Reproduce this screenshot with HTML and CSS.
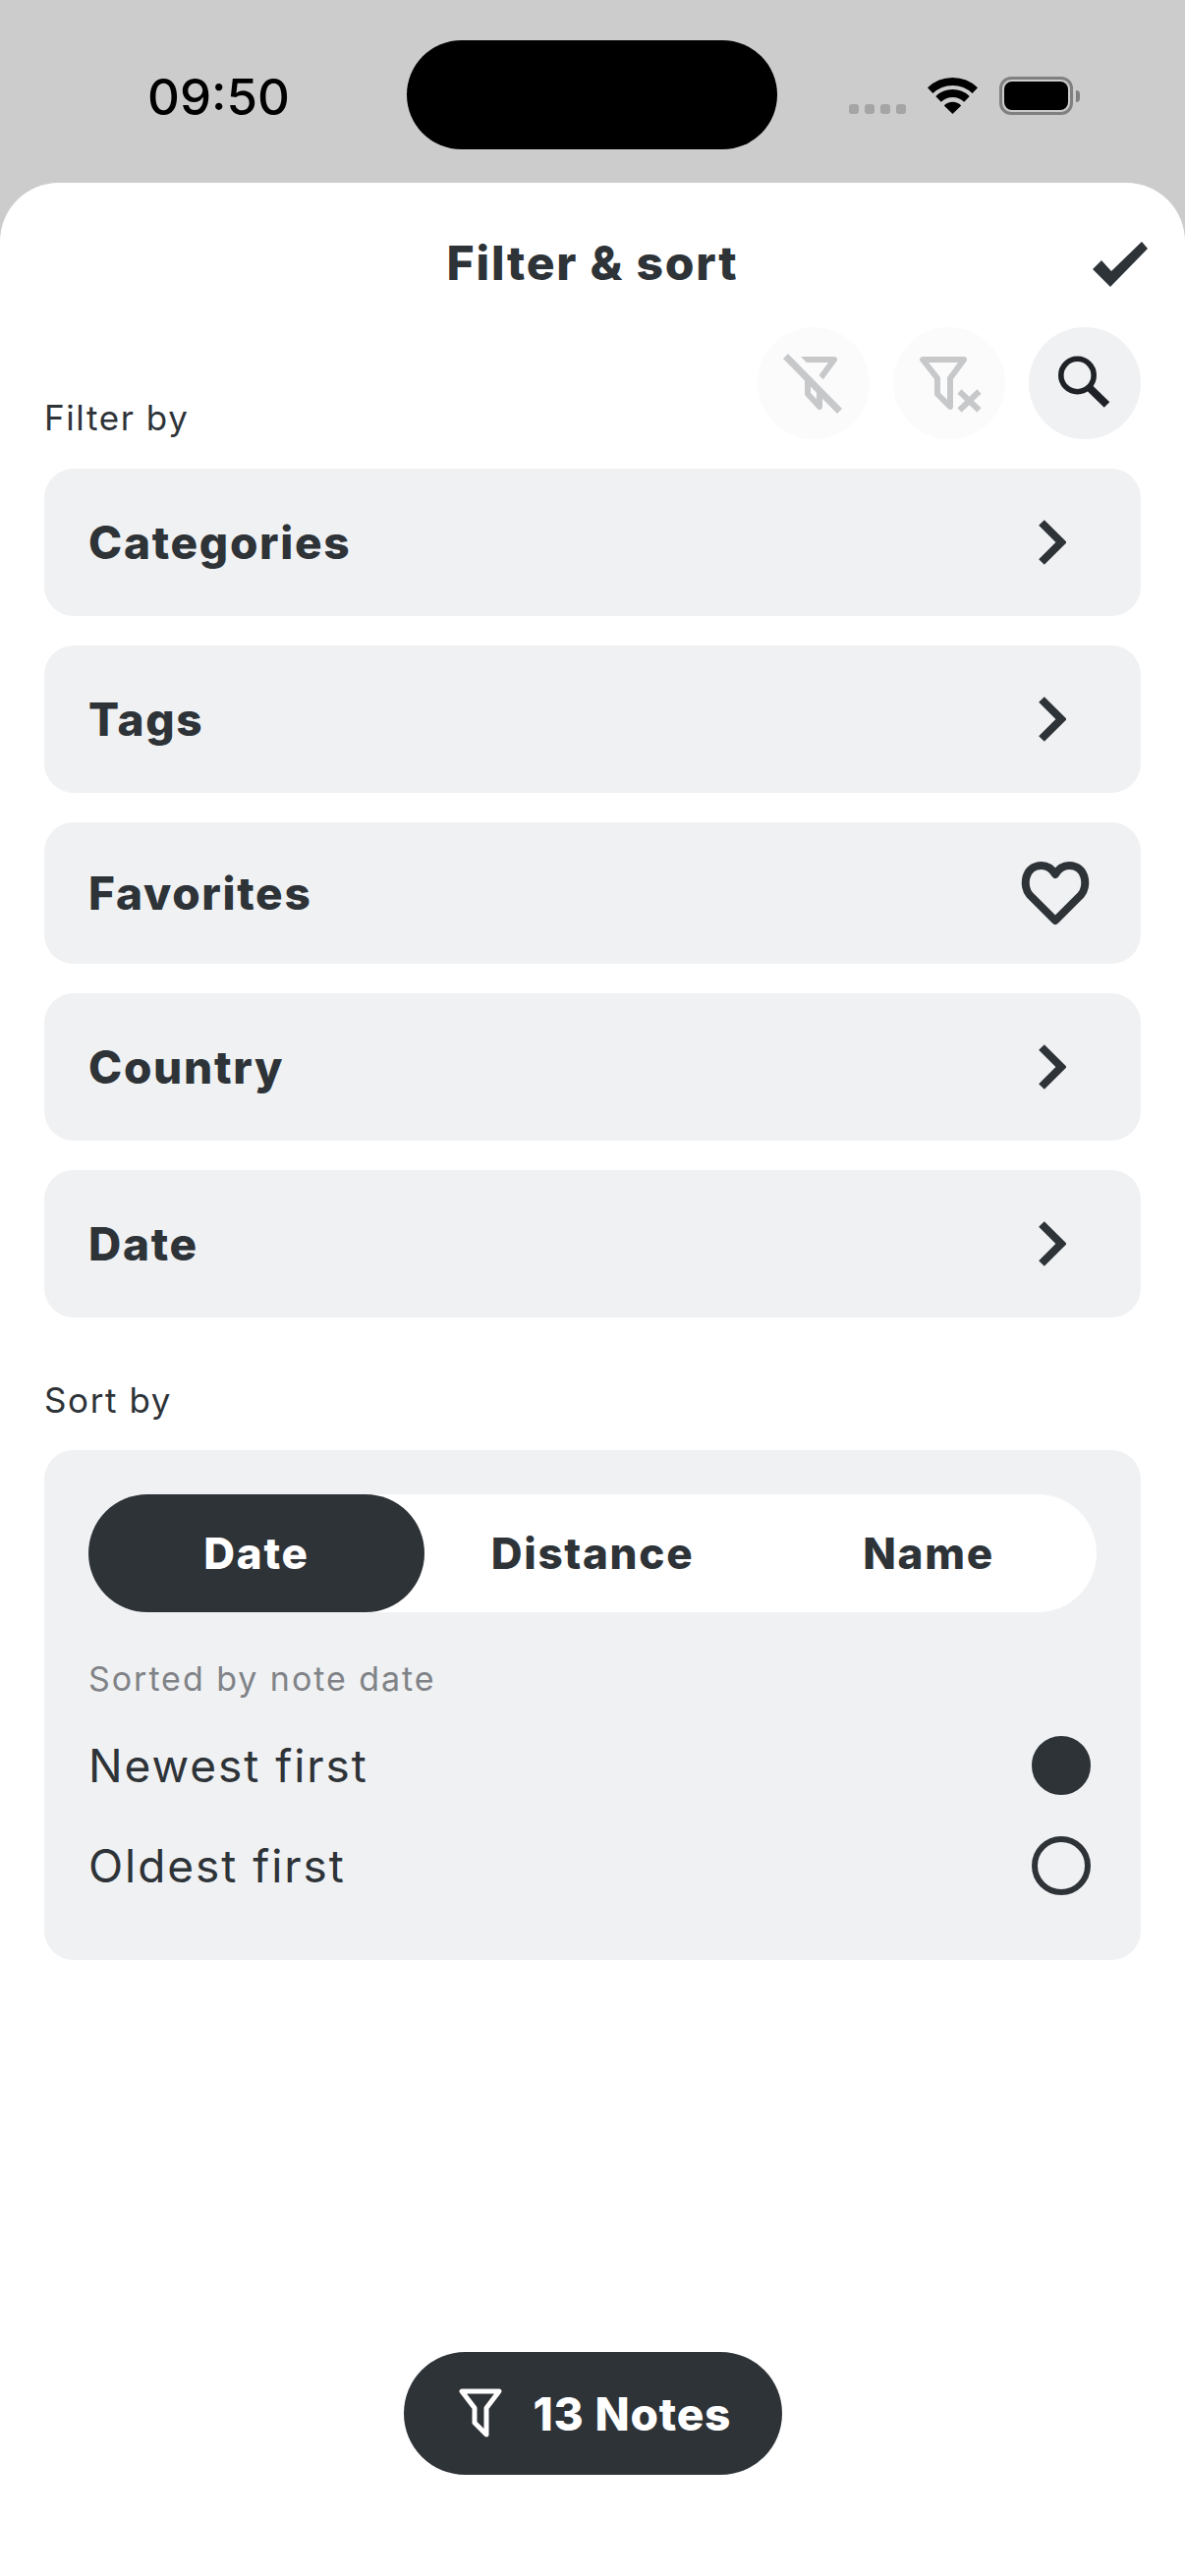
FILE: index.html
```html
<!DOCTYPE html>
<html lang="en">
<head>
<meta charset="utf-8">
<title>Filter &amp; sort</title>
<link rel="stylesheet" href="styles.css">
</head>
<body>
<div class="status">
  <div class="status-left"><span class="time">09:50</span></div>
  <div class="island"></div>
  <div class="status-right">
    <div class="dots"><i></i><i></i><i></i><i></i></div>
    <svg class="wifi" viewBox="0 0 51 37"><path d="M2.7 13.2A33 33 0 0 1 48.3 13.2" fill="none" stroke="#000" stroke-width="8"/><path d="M11 21.9A21 21 0 0 1 40 21.9" fill="none" stroke="#000" stroke-width="8"/><path d="M25.5 37L16.8 28.6A12 12 0 0 1 34.2 28.6Z"/></svg>
    <div class="battery"><div class="battery-body"><div class="battery-fill"></div></div><div class="battery-cap"></div></div>
  </div>
</div>
<main class="sheet">
  <header class="header">
    <span></span>
    <h1 class="title">Filter &amp; sort</h1>
    <svg class="check" viewBox="0 0 58 48"><path d="M1 29L10 20L20 31L51 1L57 8L19 47Z" fill="#2e3338"/></svg>
  </header>
  <div class="filter-head">
    <span class="label">Filter by</span>
    <div class="tools">
      <div class="tool tool-off"><svg viewBox="0 0 114 114"><path d="M43.500 33H78L64 52" fill="none" stroke="#c7c8ca" stroke-width="6" stroke-linejoin="round"/><path d="M51 49V68L63 81V58" fill="none" stroke="#c7c8ca" stroke-width="6" stroke-linejoin="round"/><path d="M26 27L86 88" stroke="#fbfbfb" stroke-width="13" transform="translate(3 -3)"/><path d="M28.500 29.500L83.500 85.500" stroke="#c7c8ca" stroke-width="7"/></svg></div>
      <div class="tool tool-off"><svg viewBox="0 0 114 114"><path d="M30 33H72L58 52V81L45 68V52Z" fill="none" stroke="#c7c8ca" stroke-width="6" stroke-linejoin="round"/><path d="M67.500 65.500L87.500 84.500M87.500 65.500L67.500 84.500" stroke="#c7c8ca" stroke-width="6"/></svg></div>
      <div class="tool"><svg viewBox="0 0 114 114"><circle cx="49.500" cy="49" r="16.700" fill="none" stroke="#1f2328" stroke-width="5.600"/><path d="M61 61L79.500 79" stroke="#1f2328" stroke-width="8"/></svg></div>
    </div>
  </div>
  <div class="rows">
    <div class="row"><span class="row-name">Categories</span><svg class="chev" viewBox="0 0 28 46"><path d="M3 3L23 23L3 43" fill="none" stroke="#2e3338" stroke-width="8"/></svg></div>
    <div class="row"><span class="row-name">Tags</span><svg class="chev" viewBox="0 0 28 46"><path d="M3 3L23 23L3 43" fill="none" stroke="#2e3338" stroke-width="8"/></svg></div>
    <div class="row row-fav"><span class="row-name">Favorites</span><svg class="heart" viewBox="0 0 70 65"><path d="M35 60L9 34C1.500 26 3 4 21 4C28 4 32 8 35 13C38 8 42 4 49 4C67 4 68.500 26 61 34Z" fill="none" stroke="#2e3338" stroke-width="8" stroke-linejoin="round"/></svg></div>
    <div class="row"><span class="row-name">Country</span><svg class="chev" viewBox="0 0 28 46"><path d="M3 3L23 23L3 43" fill="none" stroke="#2e3338" stroke-width="8"/></svg></div>
    <div class="row"><span class="row-name">Date</span><svg class="chev" viewBox="0 0 28 46"><path d="M3 3L23 23L3 43" fill="none" stroke="#2e3338" stroke-width="8"/></svg></div>
  </div>
  <div class="label sort-label">Sort by</div>
  <section class="sort-card">
    <div class="segment">
      <div class="seg seg-on">Date</div>
      <div class="seg">Distance</div>
      <div class="seg">Name</div>
    </div>
    <div class="caption">Sorted by note date</div>
    <div class="options">
      <div class="option"><span>Newest first</span><i class="radio radio-on"></i></div>
      <div class="option"><span>Oldest first</span><i class="radio"></i></div>
    </div>
  </section>
  <div class="notes-btn">
    <svg class="notes-icon" viewBox="0 0 44 50"><path d="M3 3H41L28 20V47L16 35V20Z" fill="none" stroke="#fff" stroke-width="5" stroke-linejoin="round"/></svg>
    <span>13 Notes</span>
  </div>
</main>
</body>
</html>
```
FILE: styles.css
```css
* { box-sizing: border-box; }
html, body { margin: 0; height: 2622px; overflow: hidden; }
body {
  background: #ccc;
  display: flex;
  flex-direction: column;
  font-family: Inter, "Noto Sans", sans-serif;
  color: #2e3338;
}
.status { height: 186px; flex: none; display: flex; padding-top: 41px; }
.status-left { width: 414px; height: 111px; padding-left: 150px; display: flex; align-items: center; }
.time { font-size: 51px; color: #000; font-weight: 500; line-height: 1; margin-top: 4px; }
.island { width: 377px; height: 111px; background: #000; border-radius: 56px; }
.status-right { flex: 1; position: relative; height: 111px; padding-left: 73px; padding-top: 37px; display: flex; align-items: flex-start; }
.dots { display: flex; gap: 6px; margin-top: 28px; }
.dots i { width: 10px; height: 10px; border-radius: 3px; background: #a5a5a5; }
.wifi { width: 51px; height: 37px; margin: 1px 0 0 22px; }
.battery { display: flex; align-items: center; margin-left: 22px; }
.battery-body { width: 75px; height: 39px; border: 3px solid #808080; border-radius: 12px; padding: 2px; }
.battery-fill { height: 100%; background: #000; border-radius: 8px; }
.battery-cap { width: 4px; height: 12px; margin-left: 3px; background: #808080; border-radius: 0 6px 6px 0; }

.sheet { flex: 1; background: #fff; border-radius: 60px 60px 0 0; display: flex; flex-direction: column; }
.header { height: 147px; display: grid; grid-template-columns: 1fr auto 1fr; align-items: start; padding: 57px 37px 0; }
.title { margin: 0; font-size: 48px; line-height: 50px; font-weight: 850; letter-spacing: 1.800px; }
.check { width: 58px; height: 48px; justify-self: end; margin-top: 2px; }

.filter-head { display: flex; justify-content: space-between; align-items: flex-end; padding: 0 45px; }
.label { font-size: 35px; line-height: 44px; font-weight: 400; letter-spacing: 1.600px; }
.tools { display: flex; gap: 24px; }
.tool { width: 114px; height: 114px; border-radius: 50%; background: #f0f1f3; }
.tool svg { display: block; width: 114px; height: 114px; }
.tool-off { background: #fbfbfb; }

.rows { display: flex; flex-direction: column; gap: 30px; padding: 30px 45px 0; }
.row { height: 150px; background: #f0f1f3; border-radius: 30px; display: flex; align-items: center; justify-content: space-between; padding: 0 76px 0 45px; }
.row-fav { height: 144px; padding-right: 52px; }
.row-name { font-size: 46px; font-weight: 850; letter-spacing: 1.700px; }
.chev { width: 28px; height: 46px; }
.heart { width: 70px; height: 65px; }

.sort-label { margin: 62px 45px 0; }
.sort-card { margin: 29px 45px 0; height: 519px; background: #f0f1f3; border-radius: 30px; padding: 45px; }
.segment { display: grid; grid-template-columns: repeat(3, 1fr); height: 120px; background: #fff; border-radius: 60px; }
.seg { display: flex; align-items: center; justify-content: center; font-size: 44px; font-weight: 850; letter-spacing: 1.700px; border-radius: 60px; }
.seg-on { background: #2e3338; color: #fff; }
.caption { margin-top: 46px; font-size: 34px; line-height: 44px; color: #808387; letter-spacing: 1.950px; }
.options { margin-top: 36px; padding-right: 6px; display: flex; flex-direction: column; gap: 42px; }
.option { height: 60px; display: flex; align-items: center; justify-content: space-between; font-size: 46px; letter-spacing: 1.950px; }
.radio { width: 60px; height: 60px; border-radius: 50%; border: 6px solid #2e3338; }
.radio-on { background: #2e3338; }

.notes-btn { margin: auto auto 103px; width: 385px; height: 125px; background: #2e3338; border-radius: 63px; color: #fff; display: flex; align-items: center; gap: 32px; padding-left: 56px; font-size: 46px; font-weight: 850; letter-spacing: 0.800px; }
.notes-icon { width: 44px; height: 50px; margin-top: -1px; }
```
